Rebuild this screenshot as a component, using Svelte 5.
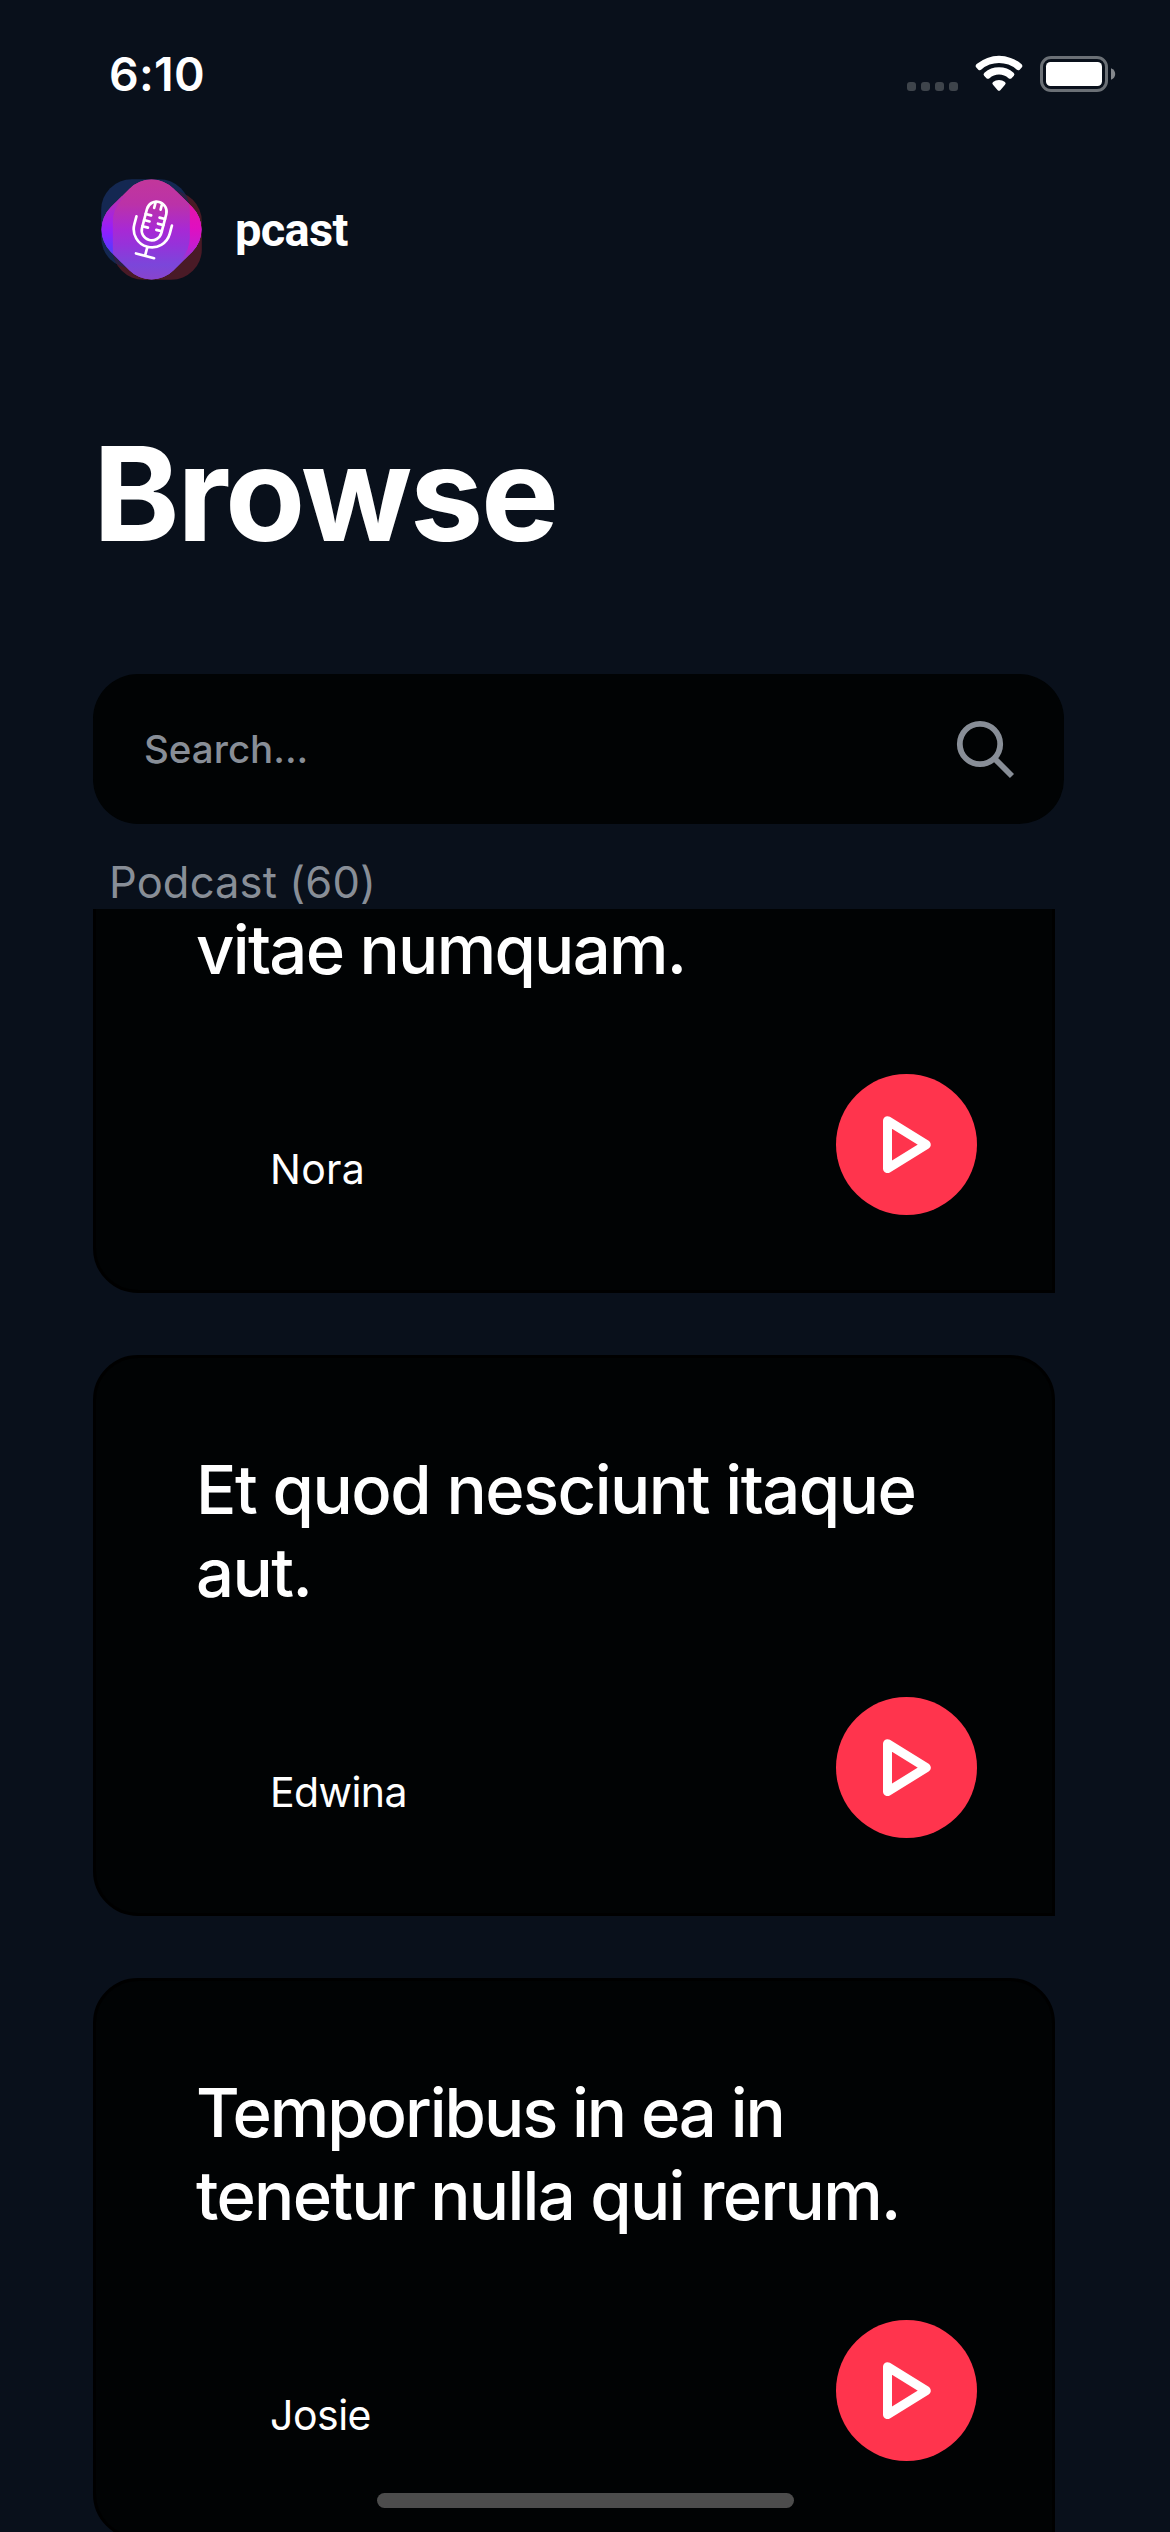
<script>
  // Each title line carries its own tracking, in pixels.
  const podcasts = [
    { lines: [['vitae numquam.', -1.72]], author: 'Nora', nameTracking: 0.3 },
    { lines: [['Et quod nesciunt itaque', -1.52], ['aut.', -1.52]], author: 'Edwina', nameTracking: -0.6 },
    { lines: [['Temporibus in ea in', -2.05], ['tenetur nulla qui rerum.', -1.72]], author: 'Josie', nameTracking: -0.5 }
  ];
  const total = 60;
</script>

<main class="screen">
  <header class="status">
    <span class="time">6:10</span>
    <div class="indicators">
      <div class="signal"><i></i><i></i><i></i><i></i></div>
      <svg class="wifi" viewBox="0 0 50 38" width="50" height="38" fill="#fff">
        <path d="M3 9.8Q.6 11.7 2.3 13.5L4.3 15.7Q5.8 17 7.4 15.6A26.4 26.4 0 0 1 42.6 15.6Q44.2 17 45.7 15.7L47.7 13.5Q49.4 11.7 47 9.8A34.4 34.4 0 0 0 3 9.8Z" />
        <path d="M10.4 18.7Q8.8 20.2 10.1 21.8L12.7 24.4Q14 25.4 15.5 24.2A14.3 14.3 0 0 1 34.5 24.2Q36 25.4 37.3 24.4L39.9 21.8Q41.2 20.2 39.6 18.7A22.2 22.2 0 0 0 10.4 18.7Z" />
        <path d="M19 27.9Q17.6 29.3 19 30.7L23.7 36.2Q25 37.5 26.3 36.2L31 30.7Q32.4 29.3 31 27.9A10 10 0 0 0 19 27.9Z" />
      </svg>
      <svg class="battery" viewBox="0 0 76 36" width="76" height="36">
        <rect x="1.5" y="1.5" width="65" height="33" rx="9.5" fill="none" stroke="#6b7076" stroke-width="3" />
        <rect x="6" y="6" width="56" height="24" rx="4.5" fill="#fff" />
        <path d="M71 12.2Q75.2 14 75.2 18T71 23.8Z" fill="#84888d" />
      </svg>
    </div>
  </header>

  <div class="brand">
    <svg class="logo" viewBox="9 9 303 303" width="101" height="101">
      <defs>
        <linearGradient id="body" x1="0" y1="0" x2="0" y2="1">
          <stop offset="0" stop-color="#c2379a" />
          <stop offset=".25" stop-color="#bb32a8" />
          <stop offset=".5" stop-color="#a829d4" />
          <stop offset=".65" stop-color="#9632da" />
          <stop offset=".85" stop-color="#7b46da" />
          <stop offset="1" stop-color="#8844cc" />
        </linearGradient>
        <linearGradient id="left" gradientUnits="userSpaceOnUse" x1="0" y1="60" x2="0" y2="260">
          <stop offset="0" stop-color="#b932a8" />
          <stop offset=".4" stop-color="#a020ee" />
          <stop offset=".55" stop-color="#8e20ff" />
          <stop offset=".8" stop-color="#5a38ff" />
          <stop offset="1" stop-color="#6a45e8" />
        </linearGradient>
        <linearGradient id="right" gradientUnits="userSpaceOnUse" x1="0" y1="60" x2="0" y2="250">
          <stop offset="0" stop-color="#e618a0" />
          <stop offset=".5" stop-color="#e00fc0" />
          <stop offset=".8" stop-color="#c41cd0" />
          <stop offset="1" stop-color="#8c3cd4" />
        </linearGradient>
        <clipPath id="diamond">
          <rect x="27" y="27" width="267" height="267" rx="94" transform="rotate(45 160.5 160.5)" />
        </clipPath>
        <clipPath id="blueTile"><rect x="9.5" y="9.5" width="266" height="267" rx="92" /></clipPath>
        <clipPath id="redTile"><rect x="44.5" y="44.5" width="267" height="267" rx="92" /></clipPath>
      </defs>
      <rect x="9.5" y="9.5" width="266" height="267" rx="92" fill="#142852" />
      <rect x="44.5" y="44.5" width="267" height="267" rx="92" fill="#491a26" />
      <g clip-path="url(#blueTile)"><g clip-path="url(#redTile)"><rect width="324" height="324" fill="#2b2144" /></g></g>
      <g clip-path="url(#diamond)">
        <rect x="9" y="9" width="303" height="303" fill="url(#body)" />
        <rect x="9" y="60" width="80" height="200" fill="url(#left)" />
        <g clip-path="url(#redTile)"><rect x="9" y="9" width="303" height="303" fill="url(#body)" /></g>
        <rect x="236" y="60" width="80" height="190" fill="url(#right)" />
        <g clip-path="url(#blueTile)"><rect x="100" y="9" width="212" height="303" fill="url(#body)" /></g>
      </g>
      <g transform="translate(168.5 135) rotate(14.7)" fill="none" stroke="#fff" stroke-width="8" stroke-linecap="round">
        <rect x="-30" y="-59" width="60" height="118" rx="30" />
        <path d="M-10-56V-38M10-56V-38M-30-14H-13M-30 5H-13M-30 24H-13M30-14H13M30 5H13M30 24H13" />
        <path d="M-55 0V25A55 55 0 0 0 55 25V0M0 80V108M-28 108H28" />
      </g>
    </svg>
    <span class="name">pcast</span>
  </div>

  <h1>Browse</h1>

  <div class="search">
    <span>Search...</span>
    <svg viewBox="0 0 60 60" width="60" height="60" fill="none" stroke="#888e97" stroke-width="5.8">
      <circle cx="26" cy="25" r="20.2" />
      <path d="M40.5 39.5L58 57" />
    </svg>
  </div>

  <p class="count">Podcast ({total})</p>

  <section class="list">
    {#each podcasts as p}
      <article class="card">
        <h2>
          {#each p.lines as [text, tracking]}
            <span class="line" style:letter-spacing="{tracking}px">{text}</span>
          {/each}
        </h2>
        <div class="row">
          <span class="author" style:letter-spacing="{p.nameTracking}px">{p.author}</span>
          <span class="play">
            <svg viewBox="0 0 141 141" width="141" height="141">
              <path d="M51.5 46.7L90.3 70.7L51.5 94.6Z" fill="none" stroke="#fff" stroke-width="9" stroke-linejoin="round" />
            </svg>
          </span>
        </div>
      </article>
    {/each}
  </section>

  <div class="home"></div>
</main>

<style>
  :global(body) {
    margin: 0;
    background: #09101b;
  }
  .screen {
    position: relative;
    display: flex;
    flex-direction: column;
    box-sizing: border-box;
    width: 1170px;
    height: 2532px;
    padding: 0 106px 0 93px;
    overflow: hidden;
    background: #09101b;
    color: #fff;
    font-family: Inter, 'Liberation Sans', sans-serif;
  }
  h1, h2, p {
    margin: 0;
  }
  svg {
    display: block;
    flex: none;
  }
  .status {
    display: flex;
    flex: none;
    align-items: center;
    justify-content: space-between;
    height: 148px;
    margin-right: -52px;
    padding-left: 16px;
  }
  .time {
    font-size: 46.5px;
    font-weight: 600;
    line-height: 56px;
    letter-spacing: 0.26px;
  }
  .indicators {
    display: flex;
    align-items: center;
  }
  .signal {
    display: flex;
    gap: 5px;
    margin: 25px 16px 0 0;
  }
  .signal i {
    width: 9px;
    height: 9px;
    border-radius: 3px;
    background: #3e444b;
  }
  .wifi {
    margin: 0 16px 2px 0;
  }
  .brand {
    display: flex;
    flex: none;
    align-items: center;
    height: 101px;
    margin-top: 31px;
    padding-left: 8px;
  }
  .name {
    margin-left: 33px;
    font-family: Roboto, sans-serif;
    font-size: 47px;
    font-weight: 700;
    line-height: 56px;
    letter-spacing: -0.7px;
  }
  h1 {
    flex: none;
    margin: 134px 0 100px;
    font-size: 131px;
    font-weight: 700;
    line-height: 160px;
    letter-spacing: -2.42px;
  }
  .search {
    display: flex;
    flex: none;
    align-items: center;
    justify-content: space-between;
    box-sizing: border-box;
    height: 150px;
    padding: 0 50px 0 51px;
    border-radius: 45px;
    background: #010304;
    color: #888e97;
    font-size: 38.5px;
    font-weight: 500;
  }
  .count {
    flex: none;
    padding: 32px 0 0 16px;
    color: #888e97;
    font-size: 43.5px;
    line-height: 53px;
    letter-spacing: 0.12px;
  }
  .list {
    display: flex;
    flex: 1;
    flex-direction: column;
    justify-content: flex-end;
    gap: 62px;
    min-height: 0;
    margin: 0 9px -7px 0;
    overflow: hidden;
  }
  .card {
    display: flex;
    flex: none;
    flex-direction: column;
    justify-content: flex-end;
    gap: 83px;
    box-sizing: border-box;
    height: 561px;
    padding: 0 75px 75px 100px;
    border: 3px solid #000;
    border-radius: 45px 45px 0 45px;
    background: #010304;
  }
  h2 {
    font-size: 67px;
    font-weight: 500;
    line-height: 83px;
  }
  .line {
    display: block;
    white-space: nowrap;
  }
  .row {
    display: flex;
    align-items: flex-end;
    justify-content: space-between;
    height: 141px;
  }
  .author {
    padding-left: 74px;
    font-size: 41px;
    line-height: 92px;
  }
  .play {
    width: 141px;
    height: 141px;
    border-radius: 50%;
    background: #ff344d;
  }
  .home {
    position: absolute;
    left: 377px;
    bottom: 24px;
    width: 417px;
    height: 15px;
    border-radius: 8px;
    background: #4c4c4c;
  }
</style>
